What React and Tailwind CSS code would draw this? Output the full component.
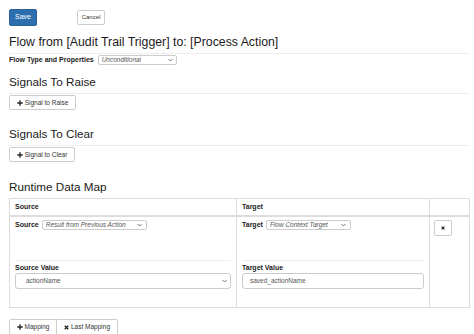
const Chevron = () => (
  <svg width="5" height="4" viewBox="0 0 10 7" className="shrink-0">
    <path d="M1 1.5 L5 5.5 L9 1.5" fill="none" stroke="#555" strokeWidth="1.6" />
  </svg>
);

const Plus = () => (
  <svg width="6" height="6" viewBox="0 0 10 10" className="shrink-0">
    <path d="M5 0.5 V9.5 M0.5 5 H9.5" stroke="#222" strokeWidth="2.2" />
  </svg>
);

const Cross = ({ size = 5 }) => (
  <svg width={size} height={size} viewBox="0 0 10 10" className="shrink-0">
    <path d="M1.5 1.5 L8.5 8.5 M8.5 1.5 L1.5 8.5" stroke="#222" strokeWidth="2.6" />
  </svg>
);

function FakeSelect({ className, children, italic = true }) {
  return (
    <div
      className={`flex items-center justify-between border border-[#ccc] rounded-[2px] bg-white text-[#555] ${italic ? 'italic' : ''} ${className}`}
    >
      <span className="truncate">{children}</span>
      <Chevron />
    </div>
  );
}

function SmallButton({ children, className = '' }) {
  return (
    <button className={`flex items-center justify-center gap-[2px] border border-[#ccc] rounded-[2px] bg-white text-[6.5px] text-[#333] ${className}`}>
      {children}
    </button>
  );
}

export default function App() {
  return (
    <div className="w-[474px] h-[334px] overflow-hidden bg-white pl-[9px] pr-[4px] pt-[9px] text-[#333] font-['Liberation_Sans',Arial,sans-serif]">
      <div className="flex items-center gap-[40px] h-[17px]">
        <button className="w-[28px] h-[17px] rounded-[2px] bg-[#2d6fae] border border-[#275f96] text-white text-[7px]">Save</button>
        <button className="w-[28px] h-[15px] rounded-[2px] bg-white border border-[#ccc] text-[#333] text-[6px]">Cancel</button>
      </div>

      <h1 className="mt-[9px] text-[12.3px] leading-[15px] pb-[3px] border-b border-[#eee] text-[#1a1a1a]">
        Flow from [Audit Trail Trigger] to: [Process Action]
      </h1>
      <div className="mt-[1px] h-[10px] flex items-center gap-[4px]">
        <span className="text-[7px] font-bold text-[#222]">Flow Type and Properties</span>
        <FakeSelect className="w-[79px] h-[10px] text-[6.5px] pl-[3px] pr-[3px]">Unconditional</FakeSelect>
      </div>

      <h2 className="mt-[10px] text-[11.7px] leading-[14px] pb-[4px] border-b border-[#eee] text-[#1a1a1a]">Signals To Raise</h2>
      <SmallButton className="w-[67px] h-[15px] mt-[1px]">
        <Plus />
        <span>Signal to Raise</span>
      </SmallButton>

      <h2 className="mt-[17px] text-[11.7px] leading-[14px] pb-[4px] border-b border-[#eee] text-[#1a1a1a]">Signals To Clear</h2>
      <SmallButton className="w-[66px] h-[15px] mt-[1px]">
        <Plus />
        <span>Signal to Clear</span>
      </SmallButton>

      <h2 className="mt-[18px] text-[11.7px] leading-[14px] text-[#1a1a1a]">Runtime Data Map</h2>

      <div className="mt-[4px] w-[461px] border border-[#ddd] grid grid-cols-[226px_193px_40px]">
        <div className="h-[18px] border-b-2 border-[#ddd] flex items-center px-[5px] text-[7px] font-bold text-[#222]">Source</div>
        <div className="h-[18px] border-b-2 border-l border-[#ddd] flex items-center px-[5px] text-[7px] font-bold text-[#222]">Target</div>
        <div className="h-[18px] border-b-2 border-l border-[#ddd]"></div>

        <div className="h-[90px] px-[5px] pt-[3px]">
          <div className="h-[10px] flex items-center gap-[3px]">
            <span className="text-[7px] font-bold text-[#222]">Source</span>
            <FakeSelect className="w-[105px] h-[10px] text-[6.5px] pl-[3px] pr-[4px]">Result from Previous Action</FakeSelect>
          </div>
          <div className="mt-[30px] border-t border-[#eee] pt-[2px]">
            <div className="text-[7px] leading-[9px] font-bold text-[#222]">Source Value</div>
            <FakeSelect italic={false} className="mt-[1px] h-[16px] text-[6.5px] pl-[10px] pr-[3px] rounded-[3px]">actionName</FakeSelect>
          </div>
        </div>
        <div className="h-[90px] border-l border-[#ddd] px-[5px] pt-[3px]">
          <div className="h-[10px] flex items-center gap-[3px]">
            <span className="text-[7px] font-bold text-[#222]">Target</span>
            <FakeSelect className="w-[85px] h-[10px] text-[6.5px] pl-[3px] pr-[4px]">Flow Context Target</FakeSelect>
          </div>
          <div className="mt-[30px] border-t border-[#eee] pt-[2px]">
            <div className="text-[7px] leading-[9px] font-bold text-[#222]">Target Value</div>
            <div className="mt-[1px] h-[16px] border border-[#ccc] rounded-[3px] flex items-center pl-[7px] text-[6.5px] text-[#555]">saved_actionName</div>
          </div>
        </div>
        <div className="h-[90px] border-l border-[#ddd] pl-[4px] pt-[3px]">
          <SmallButton className="w-[18px] h-[16px]">
            <Cross size={4} />
          </SmallButton>
        </div>
      </div>

      <div className="mt-[11px] flex">
        <SmallButton className="w-[48px] h-[16px] rounded-r-none">
          <Plus />
          <span>Mapping</span>
        </SmallButton>
        <SmallButton className="w-[61px] h-[16px] rounded-l-none border-l-0">
          <Cross />
          <span>Last Mapping</span>
        </SmallButton>
      </div>
    </div>
  );
}
